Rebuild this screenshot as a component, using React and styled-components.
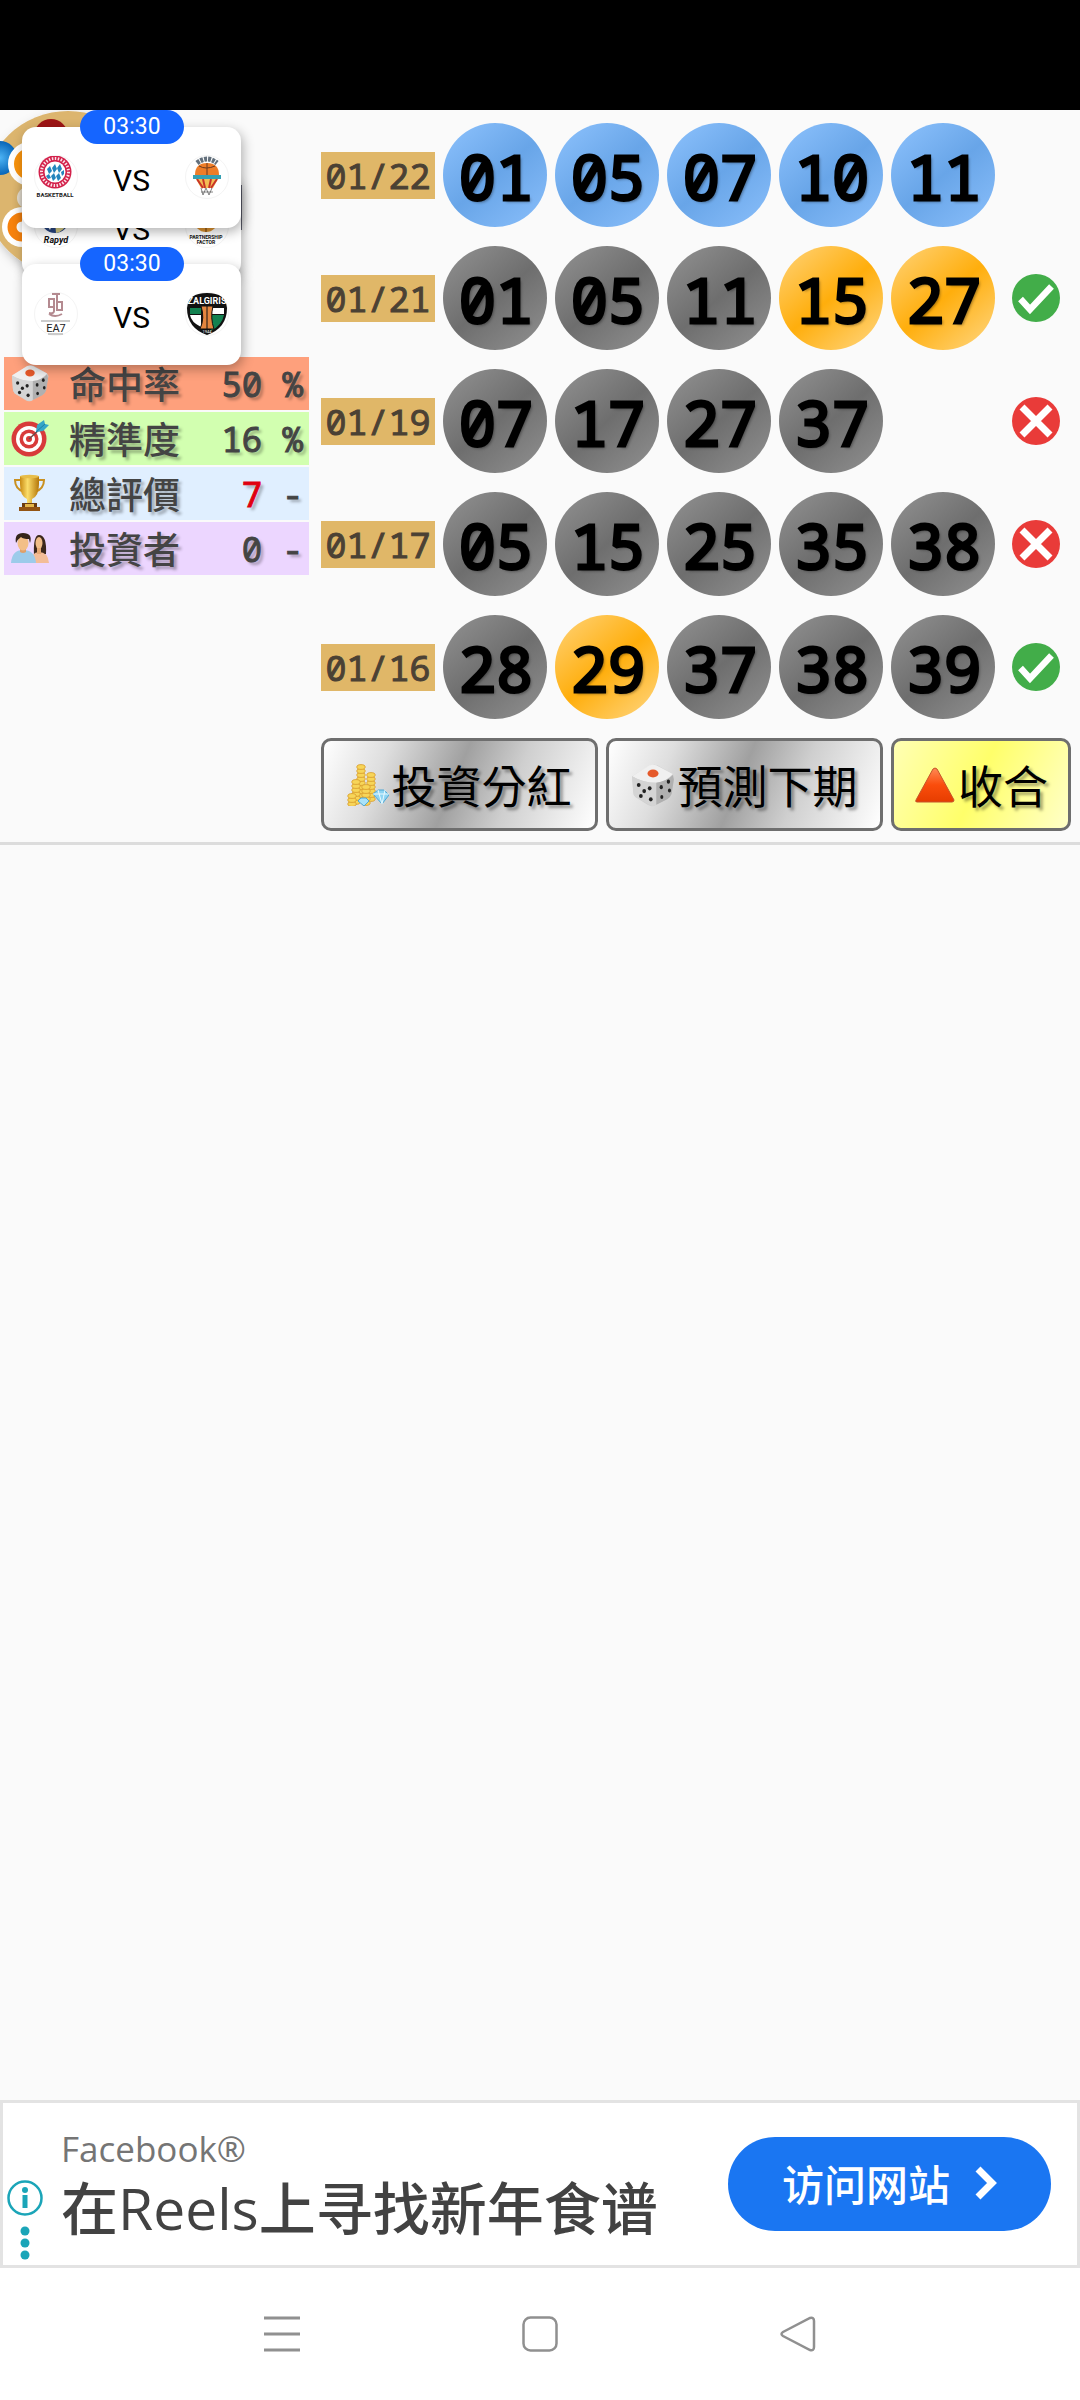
import React from "react";
import styled, { createGlobalStyle } from "styled-components";

const mono = `"Noto Sans Mono", "DejaVu Sans Mono", "Noto Sans CJK TC", monospace`;

const Global = createGlobalStyle`
  * { box-sizing: border-box; }
  body { margin: 0; background: #fafafa; font-family: "Noto Sans", "Noto Sans CJK TC", sans-serif; color: #111; }
  button { font: inherit; color: inherit; cursor: pointer; }
  svg { display: block; }
`;

const Screen = styled.div`
  position: relative;
  display: flex;
  flex-direction: column;
  min-height: 100vh;
`;
const StatusBar = styled.div`height: 110px; background: #000;`;
const Main = styled.main`flex: 1;`;

const Card = styled.section`
  display: flex;
  gap: 12px;
  padding: 0 9px 11px 0;
  border-bottom: 3px solid #dcdcdc;
`;
const Side = styled.div`width: 309px; flex: none;`;
const AvatarBox = styled.div`
  height: 247px;
  overflow: hidden;
`;
const Stats = styled.table`
  width: 305px;
  border-collapse: separate;
  border-spacing: 0 2px;
  margin: -2px 0 0 4px;
  color: #444;
  text-shadow: 3px 3px 3px rgba(0, 0, 0, 0.3);
`;
const StatRow = styled.tr`background: ${(p) => p.$bg};`;
const StatIcon = styled.td`width: 62px; height: 53px; padding: 0 0 2px 7px;`;
const StatLabel = styled.th`
  padding: 0 0 1px 3px;
  font: 500 37px/50px "Noto Sans CJK TC", sans-serif;
  text-align: left;
`;
const StatValue = styled.td`
  padding: 0 6px 0 0;
  font: 400 34px/52px ${mono};
  -webkit-text-stroke: 1px;
  text-align: right;
  white-space: pre;
`;
const Hot = styled.span`color: #e00010;`;

const Content = styled.div`flex: 1; min-width: 0;`;
const Draws = styled.div`
  display: flex;
  flex-direction: column;
  gap: 19px;
  padding-top: 13px;
`;
const DrawRow = styled.div`
  display: grid;
  grid-template-columns: 114px repeat(5, 104px) 48px;
  column-gap: 8px;
  align-items: center;
`;
const DateTag = styled.time`
  background: #e0b768;
  color: #4b4134;
  font: 400 35px/48px ${mono};
  height: 47px;
  -webkit-text-stroke: 1px;
  text-align: center;
`;
const tones = {
  blue: ["#88befa", "#68a5e8", "#85bbf8"],
  grey: ["#8d8d8d", "#6e6e6e", "#8c8c8c"],
  gold: ["#ffce6a", "#ffae0c", "#ffd172"],
};
const Ball = styled.span`
  height: 104px;
  padding-left: 2px;
  border-radius: 50%;
  background: linear-gradient(140deg, ${(p) => tones[p.$tone][0]} 8%, ${(p) => tones[p.$tone][1]} 50%, ${(p) => tones[p.$tone][2]} 92%);
  color: #000;
  font: 400 62px/106px ${mono};
  -webkit-text-stroke: 3px #000;
  text-align: center;
  text-shadow: 2px 2px 3px rgba(0, 0, 0, 0.4);
`;
const Result = styled.span`grid-column: 7; padding-left: 9px; svg { overflow: visible; }`;

const Actions = styled.div`
  display: grid;
  grid-template-columns: 277fr 277fr 180fr;
  gap: 8px;
  margin-top: 19px;
`;
const Action = styled.button`
  display: flex;
  align-items: center;
  justify-content: center;
  gap: 2px;
  height: 93px;
  padding: 0;
  border: 3px solid #6e6e6e;
  border-radius: 10px;
  background: ${(p) =>
    p.$yellow
      ? "linear-gradient(115deg, #ffffb4 0%, #ffff6a 48%, #ffffc8 100%)"
      : "linear-gradient(112deg, #ffffff 0%, #dedede 22%, #a0a0a0 48%, #cfcfcf 68%, #ffffff 100%)"};
  font: 400 45px/60px "Noto Sans CJK TC", sans-serif;
  color: #000;
  text-shadow: 3px 3px 3px rgba(0, 0, 0, 0.35);
`;

const Overlay = styled.aside`
  position: absolute;
  left: 22px;
  top: 110px;
  width: 219px;
`;
const MatchCard = styled.div`
  position: absolute;
  top: ${(p) => p.$top}px;
  left: 0;
  width: 100%;
  height: 101px;
  display: flex;
  justify-content: space-between;
  padding: 28px 12px 0;
  border-radius: 14px;
  background: #fff;
  box-shadow: 2px 4px 12px rgba(0, 0, 0, 0.3);
`;
const Kickoff = styled.div`
  position: absolute;
  top: -17px;
  left: 58px;
  width: 104px;
  border-radius: 17px;
  background: #1565ff;
  color: #fff;
  font: 400 23px/34px Roboto, sans-serif;
  text-align: center;
`;
const Versus = styled.div`font: 400 30px/52px Roboto, sans-serif; color: #000;`;
const Crest = styled.div`
  width: 44px;
  height: 44px;
  border-radius: 50%;
  border: 1px solid #f4f4f4;
`;

const Ad = styled.section`
  display: flex;
  align-items: center;
  height: 168px;
  padding: 0 26px 0 4px;
  border: 3px solid #e3e3e3;
  background: #fff;
`;
const AdMarks = styled.div`
  align-self: flex-end;
  width: 36px;
  margin-right: 18px;
  padding-bottom: 3px;
`;
const AdText = styled.div`flex: 1; padding-top: 2px;`;
const AdBrand = styled.div`
  font: 400 35px/46px "Open Sans", sans-serif;
  color: #757575;
`;
const AdTitle = styled.div`
  font: 500 57px/72px "Open Sans", "Noto Sans CJK SC", sans-serif;
  color: #424242;
`;
const Latin = styled.span`font-weight: 400;`;
const AdLink = styled.a`
  display: flex;
  align-items: center;
  justify-content: center;
  gap: 25px;
  width: 323px;
  height: 94px;
  padding-bottom: 2px;
  border-radius: 47px;
  background: #1a76f2;
  color: #fff;
  font: 500 42px/60px "Noto Sans CJK SC", sans-serif;
  text-decoration: none;
`;

const Nav = styled.nav`
  display: flex;
  justify-content: center;
  gap: 198px;
  height: 132px;
  background: #fff;
`;
const NavButton = styled.button`
  display: grid;
  place-items: center;
  width: 60px;
  padding: 0;
  border: 0;
  background: none;
`;

const Die = ({ size }) => (
  <svg width={size} height={size} viewBox="0 0 40 40" aria-hidden="true">
    <path d="M1 12 18 2q3-1 6 0l14 8q2 2 1 5l-3 14q-1 3-4 4l-11 6q-3 1-6-1L4 31q-2-2-2-5z" fill="#d0d0d0" />
    <path d="M1 12 17 2q3-1 6 0l15 8q-6 7-15 8-12 0-22-6z" fill="#f0f0f0" />
    <path d="M1 12q10 6 22 6v20q-3 2-6 0L4 31q-2-2-2-5z" fill="#d4d4d4" />
    <path d="M38 11q-6 6-15 7v20l10-5q3-2 4-5l2-13z" fill="#b0b0b0" />
    <ellipse cx="20" cy="9.500" rx="5" ry="3.600" fill="#e5592a" />
    <g fill="#222">
      <ellipse cx="7" cy="20" rx="1.700" ry="1.900" /><ellipse cx="17" cy="23" rx="1.700" ry="1.900" />
      <ellipse cx="12" cy="25.500" rx="1.700" ry="1.900" /><ellipse cx="9" cy="30" rx="1.700" ry="1.900" />
      <ellipse cx="18" cy="33" rx="1.700" ry="1.900" /><ellipse cx="34" cy="17" rx="1.500" ry="1.900" />
      <ellipse cx="27.500" cy="22" rx="1.500" ry="1.900" /><ellipse cx="35" cy="25" rx="1.400" ry="1.800" />
      <ellipse cx="28" cy="31" rx="1.400" ry="1.800" />
    </g>
  </svg>
);
const Target = () => (
  <svg width="38" height="38" viewBox="0 0 38 38" aria-hidden="true">
    <circle cx="18" cy="20" r="17.500" fill="#d83a3a" />
    <circle cx="18" cy="20" r="13" fill="#fff" />
    <circle cx="18" cy="20" r="9.500" fill="#d83a3a" />
    <circle cx="18" cy="20" r="6" fill="#fff" />
    <circle cx="18" cy="20" r="3" fill="#d83a3a" />
    <path d="m18 20 11-10" stroke="#6b4a4a" strokeWidth="1.500" />
    <path d="m25 13 1-7 7-5 1 4 4 1-6 6z" fill="#35a6c8" />
    <path d="m25 13 9-8" stroke="#1c7fa5" />
  </svg>
);
const Trophy = () => (
  <svg width="38" height="38" viewBox="0 0 38 38" aria-hidden="true">
    <defs>
      <linearGradient id="cup"><stop offset="0" stopColor="#c98a12" /><stop offset=".4" stopColor="#fbdd6a" /><stop offset="1" stopColor="#b5770a" /></linearGradient>
    </defs>
    <path d="M10 6H4q0 9 9 12M27 6h6q0 9-9 12" fill="none" stroke="#c99020" strokeWidth="2" />
    <path d="M9 2h19v8q0 12-7 15v5h-5v-5Q9 22 9 10z" fill="url(#cup)" />
    <ellipse cx="18.500" cy="2.500" rx="9.500" ry="1.800" fill="#e7bd4a" />
    <path d="M11 29h15v5H11z" fill="#6b3c12" />
    <path d="M8 33h21v4H8z" fill="#935414" />
    <path d="M14 30h9v3h-9z" fill="#e4b64a" />
  </svg>
);
const People = () => (
  <svg width="38" height="38" viewBox="0 0 38 38" aria-hidden="true">
    <path d="M23 27q-1-21 5-21 8 0 7 19z" fill="#3c281c" />
    <ellipse cx="28" cy="14" rx="3.500" ry="6" fill="#f0bd88" />
    <path d="M20 34q0-11 8-11 9 0 10 11z" fill="#f3bd97" />
    <path d="M26 19h4v6h-4z" fill="#e5a873" />
    <path d="M0 34q1-13 12-13 12 0 13 13z" fill="#9ccbea" />
    <path d="M9 18h6v5q-3 2-6 0z" fill="#dfa06a" />
    <ellipse cx="12" cy="14" rx="5.500" ry="7.500" fill="#f3bf87" />
    <path d="M5 14Q3 4 12 4q10 0 7 10l-1-4q-6 0-8-2-3 2-5 6z" fill="#35241a" />
  </svg>
);
const Coins = () => (
  <svg width="42" height="42" viewBox="0 0 42 42" aria-hidden="true">
    {[[9, 1, 9], [19, 9, 7], [4, 16, 6], [0, 30, 3], [14, 21, 5]].map(([x, y, n]) =>
      Array.from({ length: n }, (_, i) => (
        <ellipse key={x + "-" + i} cx={x + 5} cy={y + 2 + (n - 1 - i) * 4} rx="4.200" ry="2.400" fill="#f7d558" stroke="#d79a2c" strokeWidth=".8" />
      ))
    )}
    <path d="m26 30 5-4h6l5 5-7 9z" fill="#8fd5f3" stroke="#4fa7d4" />
    <path d="m11 37 3-3h5l3 3-5 5z" fill="#a9e2f8" stroke="#4fa7d4" />
    <path d="M26 30h16M31 26l4 14 3-14" stroke="#e9faff" fill="none" />
  </svg>
);
const RedTriangle = () => (
  <svg width="42" height="36" viewBox="0 0 42 36" aria-hidden="true">
    <defs>
      <linearGradient id="tri" x2="0" y2="1"><stop offset="0" stopColor="#ff8a55" /><stop offset=".5" stopColor="#fa4d0c" /><stop offset="1" stopColor="#e63d00" /></linearGradient>
    </defs>
    <path d="M19 2q2-2 4 0l17 31q0 2-2 2H3q-2 0-1-2z" fill="url(#tri)" stroke="#c5542a" />
  </svg>
);
const Hit = () => (
  <svg width="48" height="48" viewBox="0 0 48 48" role="img" aria-label="hit">
    <circle cx="24" cy="24" r="24" fill="#42ad49" />
    <path d="m8.500 25 9.500 10.500L39.500 12.500" fill="none" stroke="#fff" strokeWidth="6.500" />
  </svg>
);
const Miss = () => (
  <svg width="48" height="48" viewBox="0 0 48 48" role="img" aria-label="miss">
    <circle cx="24" cy="24" r="24" fill="#e93b39" />
    <path d="m10 10 28 28M38 10 10 38" stroke="#fff" strokeWidth="7" />
  </svg>
);

const Avatar = () => (
  <svg width="250" height="200" viewBox="0 0 250 200" aria-hidden="true">
    <defs>
      <radialGradient id="bl"><stop offset="0" stopColor="#4db4f5" /><stop offset="1" stopColor="#0765b8" /></radialGradient>
      <filter id="sh" x="-20%" y="-20%" width="150%" height="150%"><feDropShadow dx="5" dy="5" stdDeviation="6" floodOpacity=".3" /></filter>
    </defs>
    <ellipse cx="68" cy="83" rx="84" ry="82" fill="#dcb56e" filter="url(#sh)" />
    <circle cx="51" cy="26" r="17" fill="#9e1515" />
    <circle cx="0" cy="48" r="17" fill="url(#bl)" />
    <circle cx="30" cy="54" r="19" fill="#f7920d" stroke="#fff" strokeWidth="6" />
    <circle cx="28" cy="88" r="11" fill="#e9e2d4" />
    <circle cx="22" cy="117" r="20" fill="#fff" />
    <circle cx="22" cy="117" r="10" fill="#fff" stroke="#f7820d" strokeWidth="9" />
    <path d="M236 75h6v45h-6z" fill="#666878" />
  </svg>
);

const logoText = { fontFamily: "Roboto, sans-serif", textAnchor: "middle" };
const Bayern = () => (
  <svg width="42" height="42" viewBox="0 0 42 42" aria-hidden="true">
    <circle cx="20" cy="16" r="16.500" fill="#d3214b" />
    <circle cx="20" cy="16" r="13.500" fill="none" stroke="#fbe3e9" strokeWidth="3" strokeDasharray="1.500 1.500" />
    <circle cx="20" cy="16" r="10.500" fill="#fff" />
    <path d="m12 13 3-3 2 5-3 3zM17 12l3-4 2 5-3 4zM22 12l3-4 2 5-3 4zM11 20l3-2 2 4-3 1zM16 20l3-3 2 5-3 3zM21 20l3-3 2 5-3 3zM26 16l3-2 0 4-2 2z" fill="#2485bd" />
    <text x="20" y="41" fontSize="6" fontWeight="700" fill="#222" {...logoText}>BASKETBALL</text>
  </svg>
);
const Balloon = () => (
  <svg width="42" height="42" viewBox="0 0 42 42" aria-hidden="true">
    <path d="M11 7q10-8 20 0" fill="none" stroke="#63707c" strokeWidth="5" strokeDasharray="3 1" />
    <path d="M9 19q0-12 12-12t12 12l-6 10H15z" fill="#ee7d28" />
    <path d="M10 23h22l-5 9H15z" fill="#f3bd55" />
    <path d="m11 23 6 9M31 23l-6 9M17 23l2 9M25 23l-2 9" stroke="#c93328" strokeWidth="2" />
    <path d="M21 7v12M13 10q7 4 16 0" stroke="#6b3a20" fill="none" />
    <path d="M7 19h28v4H7z" fill="#35a0b3" />
    <path d="m15 32 2 7 3-7 3 7 3-7M15 36h12" stroke="#666" fill="none" strokeWidth=".8" />
  </svg>
);
const Rapyd = () => (
  <svg width="42" height="42" viewBox="0 0 42 42" aria-hidden="true">
    <circle cx="20" cy="14" r="14" fill="#284580" />
    <path d="M20 17q8-7 12 0-2 9-11 11z" fill="#d8cd86" />
    <path d="m9 16 9 2-3 7z" fill="#fff" />
    <text x="21" y="38" fontSize="9" fontWeight="700" fontStyle="italic" fill="#111" {...logoText}>Rapyd</text>
  </svg>
);
const Partner = () => (
  <svg width="42" height="42" viewBox="0 0 42 42" aria-hidden="true">
    <circle cx="20" cy="15" r="12" fill="#df9430" />
    <path d="M20 3v24M8 15h24M12 7q5 8 0 16M28 7q-5 8 0 16" stroke="#6b3a10" fill="none" />
    <text x="20" y="34" fontSize="5" fontWeight="700" fill="#111" {...logoText}>PARTNERSHIP</text>
    <text x="20" y="39" fontSize="5" fontWeight="700" fill="#111" {...logoText}>FACTOR</text>
  </svg>
);
const Ea7 = () => (
  <svg width="42" height="42" viewBox="0 0 42 42" aria-hidden="true">
    <path d="M14 6h5v8h-5zM19 6v12q0 3-5 2M22 2v15h5V9h-5M17 1h8M14 21q6 4 13 0M27 9v8" fill="none" stroke="#b48a90" strokeWidth="2" />
    <path d="M6 28h29" stroke="#999" />
    <text x="21" y="39" fontSize="11" fill="#222" {...logoText}>EA7</text>
    <path d="M13 41h15" stroke="#999" />
  </svg>
);
const Zalgiris = () => (
  <svg width="42" height="42" viewBox="0 0 42 42" aria-hidden="true">
    <path d="M1 15Q2 0 21 0t20 15q0 20-20 27Q1 35 1 15z" fill="#111" />
    <path d="M4 15h11v6H4zM26 22h12q-2 10-13 16z" fill="#138150" />
    <path d="M26 15h12v6H26zM4 22h11v12Q5 29 4 22z" fill="#fff" />
    <path d="M15 13h12q-3 12 1 23H14q5-11 1-23z" fill="#e4853e" stroke="#111" />
    <path d="M21 13v23" stroke="#111" />
    <text x="21" y="11" fontSize="9" fontWeight="700" fill="#fff" {...logoText}>ZALGIRIS</text>
    <text x="21" y="40" fontSize="4" fill="#fff" {...logoText}>1944</text>
  </svg>
);

const matches = [
  { top: 66, home: Rapyd, away: Partner },
  { top: 17, time: "03:30", home: Bayern, away: Balloon },
  { top: 154, time: "03:30", home: Ea7, away: Zalgiris },
];
const stats = [
  { label: "命中率", value: "50", unit: "%", bg: "#fea07c", icon: <Die size={38} /> },
  { label: "精準度", value: "16", unit: "%", bg: "#d2ffb0", icon: <Target /> },
  { label: "總評價", value: "7", unit: "-", bg: "#e0efff", icon: <Trophy />, hot: true },
  { label: "投資者", value: "0", unit: "-", bg: "#ecd6ff", icon: <People /> },
];
const draws = [
  { date: "01/22", tone: "blue", nums: ["01", "05", "07", "10", "11"], hits: [] },
  { date: "01/21", tone: "grey", nums: ["01", "05", "11", "15", "27"], hits: ["15", "27"], result: <Hit /> },
  { date: "01/19", tone: "grey", nums: ["07", "17", "27", "37"], hits: [], result: <Miss /> },
  { date: "01/17", tone: "grey", nums: ["05", "15", "25", "35", "38"], hits: [], result: <Miss /> },
  { date: "01/16", tone: "grey", nums: ["28", "29", "37", "38", "39"], hits: ["29"], result: <Hit /> },
];

export default function App() {
  return (
    <Screen>
      <Global />
      <StatusBar />
      <Main>
        <Card>
          <Side>
            <AvatarBox><Avatar /></AvatarBox>
            <Stats>
              <tbody>
                {stats.map((s) => (
                  <StatRow key={s.label} $bg={s.bg}>
                    <StatIcon>{s.icon}</StatIcon>
                    <StatLabel scope="row">{s.label}</StatLabel>
                    <StatValue>{s.hot ? <Hot>{s.value}</Hot> : s.value} {s.unit}</StatValue>
                  </StatRow>
                ))}
              </tbody>
            </Stats>
          </Side>
          <Content>
            <Draws>
              {draws.map((d) => (
                <DrawRow key={d.date}>
                  <DateTag>{d.date}</DateTag>
                  {d.nums.map((n) => (
                    <Ball key={n} $tone={d.hits.includes(n) ? "gold" : d.tone}>{n}</Ball>
                  ))}
                  {d.result && <Result>{d.result}</Result>}
                </DrawRow>
              ))}
            </Draws>
            <Actions>
              <Action><Coins />投資分紅</Action>
              <Action><Die size={44} />預測下期</Action>
              <Action $yellow><RedTriangle />收合</Action>
            </Actions>
          </Content>
        </Card>
      </Main>
      <Ad>
        <AdMarks>
          <svg width="36" height="82" viewBox="0 0 36 82" aria-hidden="true">
            <circle cx="18" cy="18" r="16.500" fill="none" stroke="#1ba5b8" strokeWidth="2.500" />
            <circle cx="18" cy="10" r="3" fill="#1ba5b8" />
            <path d="M18 15v13" stroke="#1ba5b8" strokeWidth="5" />
            <circle cx="18" cy="51" r="4.500" fill="#1ba5b8" />
            <circle cx="18" cy="63" r="4.500" fill="#1ba5b8" />
            <circle cx="18" cy="75" r="4.500" fill="#1ba5b8" />
          </svg>
        </AdMarks>
        <AdText>
          <AdBrand>Facebook®</AdBrand>
          <AdTitle>在<Latin>Reels</Latin>上寻找新年食谱</AdTitle>
        </AdText>
        <AdLink href="#visit">
          访问网站
          <svg width="22" height="34" viewBox="0 0 22 34" aria-hidden="true">
            <path d="m3 3 14 14L3 31" fill="none" stroke="#fff" strokeWidth="7" />
          </svg>
        </AdLink>
      </Ad>
      <Nav>
        <NavButton aria-label="Recent apps">
          <svg width="36" height="36" viewBox="0 0 36 36"><path d="M0 2h36M0 18h36M0 34h36" stroke="#909090" strokeWidth="3" /></svg>
        </NavButton>
        <NavButton aria-label="Home">
          <svg width="36" height="36" viewBox="0 0 36 36"><rect x="1.500" y="1.500" width="33" height="33" rx="7" fill="none" stroke="#909090" strokeWidth="2.500" /></svg>
        </NavButton>
        <NavButton aria-label="Back">
          <svg width="36" height="36" viewBox="0 0 36 36"><path d="M30 2q4-1 4 3v26q0 4-4 3L3 20q-3-2 0-4z" fill="none" stroke="#909090" strokeWidth="2.500" /></svg>
        </NavButton>
      </Nav>
      <Overlay>
        {matches.map((m) => (
          <MatchCard key={m.top} $top={m.top}>
            {m.time && <Kickoff>{m.time}</Kickoff>}
            <Crest><m.home /></Crest>
            <Versus>VS</Versus>
            <Crest><m.away /></Crest>
          </MatchCard>
        ))}
      </Overlay>
    </Screen>
  );
}
